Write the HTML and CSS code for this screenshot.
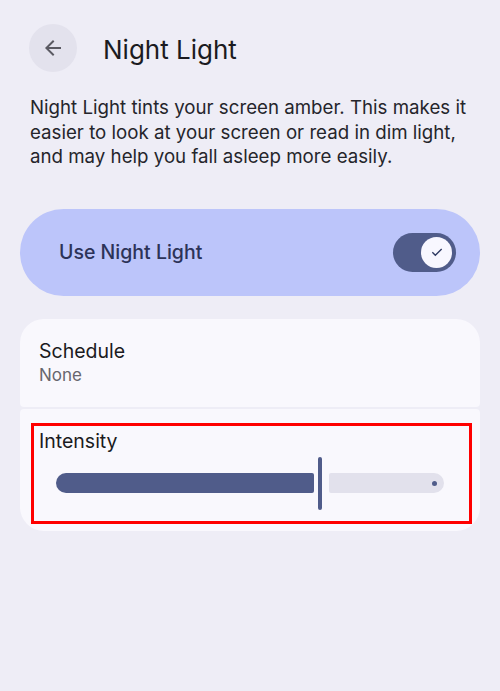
FILE: index.html
```html
<!DOCTYPE html>
<html lang="en">
<head>
    <meta charset="UTF-8">
    <meta name="viewport" content="width=device-width, initial-scale=1.0">
    <title>Night Light</title>
    <link rel="stylesheet" href="styles.css">
</head>
<body>
    <div class="header">
        <button class="back-button" aria-label="Back">
            <svg width="24" height="24" viewBox="0 0 24 24">
                <path d="M20 11H7.83l5.59-5.59L12 4l-8 8 8 8 1.41-1.41L7.83 13H20v-2z" fill="#5b5a63"/>
            </svg>
        </button>
        <h1>Night Light</h1>
    </div>

    <p class="intro">Night Light tints your screen amber. This makes it easier to look at your screen or read in dim light, and may help you fall asleep more easily.</p>

    <div class="main-toggle">
        <span>Use Night Light</span>
        <div class="switch">
            <div class="thumb">
                <svg width="16" height="16" viewBox="0 0 24 24">
                    <path d="M5 12.5l4.5 4.5L19 7.5" fill="none" stroke="#2f3a63" stroke-width="2"/>
                </svg>
            </div>
        </div>
    </div>

    <div class="group">
        <div class="item item-top">
            <div class="item-title">Schedule</div>
            <div class="item-summary">None</div>
        </div>
        <div class="item item-bottom">
            <div class="item-title">Intensity</div>
            <div class="slider">
                <div class="track-active"></div>
                <div class="handle"></div>
                <div class="track-inactive"><span class="stop"></span></div>
            </div>
            <div class="highlight"></div>
        </div>
    </div>
</body>
</html>
```

FILE: styles.css
```css
body {
    font-family: 'Inter', 'Roboto', sans-serif;
    background-color: #eeedf6;
    color: #1b1b21;
    margin: 0;
    padding: 24px 20px 0 20px;
}
.header {
    display: flex;
    align-items: center;
    height: 48px;
}
.back-button {
    width: 48px;
    height: 48px;
    margin-left: 9px;
    border: none;
    border-radius: 50%;
    background-color: #e3e2ed;
    display: flex;
    align-items: center;
    justify-content: center;
    padding: 0;
}
h1 {
    margin: 2px 0 0 26px;
    font-size: 26px;
    font-weight: 400;
    color: #1b1b21;
}
.intro {
    margin: 24px 0 0 10px;
    font-size: 18.7px;
    line-height: 24.5px;
    color: #25252b;
}
.main-toggle {
    display: flex;
    align-items: center;
    justify-content: space-between;
    height: 87px;
    margin-top: 39px;
    padding: 0 24px 0 39px;
    background-color: #bcc5fa;
    border-radius: 44px;
}
.main-toggle span {
    font-size: 19.5px;
    font-weight: 500;
    color: #2c3358;
}
.switch {
    width: 63px;
    height: 39px;
    border-radius: 20px;
    background-color: #505c8a;
    display: flex;
    align-items: center;
    justify-content: flex-end;
    padding-right: 4px;
    box-sizing: border-box;
}
.thumb {
    width: 31px;
    height: 31px;
    border-radius: 50%;
    background-color: #f8f7ff;
    display: flex;
    align-items: center;
    justify-content: center;
}
.group {
    margin-top: 23px;
    display: flex;
    flex-direction: column;
    gap: 2px;
}
.item {
    background-color: #f9f8fd;
    padding: 20px 19px 19px 19px;
}
.item-top {
    border-radius: 24px 24px 4px 4px;
}
.item-bottom {
    position: relative;
    border-radius: 4px 4px 24px 24px;
    padding-bottom: 21px;
}
.item-title {
    font-size: 19.5px;
    line-height: 24px;
    color: #1b1b21;
}
.item-summary {
    font-size: 17px;
    line-height: 25px;
    color: #67666e;
}
.slider {
    display: flex;
    align-items: center;
    height: 53px;
    margin: 4px 17px 0 17px;
}
.track-active {
    width: 258px;
    height: 20px;
    background-color: #505c8a;
    border-radius: 10px 2px 2px 10px;
}
.handle {
    width: 4px;
    height: 53px;
    margin: 0 7px 0 4px;
    background-color: #505c8a;
    border-radius: 2px;
}
.track-inactive {
    flex: 1;
    height: 20px;
    background-color: #e2e1ec;
    border-radius: 2px 10px 10px 2px;
    display: flex;
    align-items: center;
    justify-content: flex-end;
    padding-right: 7px;
}
.stop {
    width: 5px;
    height: 5px;
    border-radius: 50%;
    background-color: #505c8a;
}
.highlight {
    position: absolute;
    left: 11px;
    right: 8px;
    top: 14px;
    bottom: 7px;
    border: 3px solid #ff0000;
}
```
